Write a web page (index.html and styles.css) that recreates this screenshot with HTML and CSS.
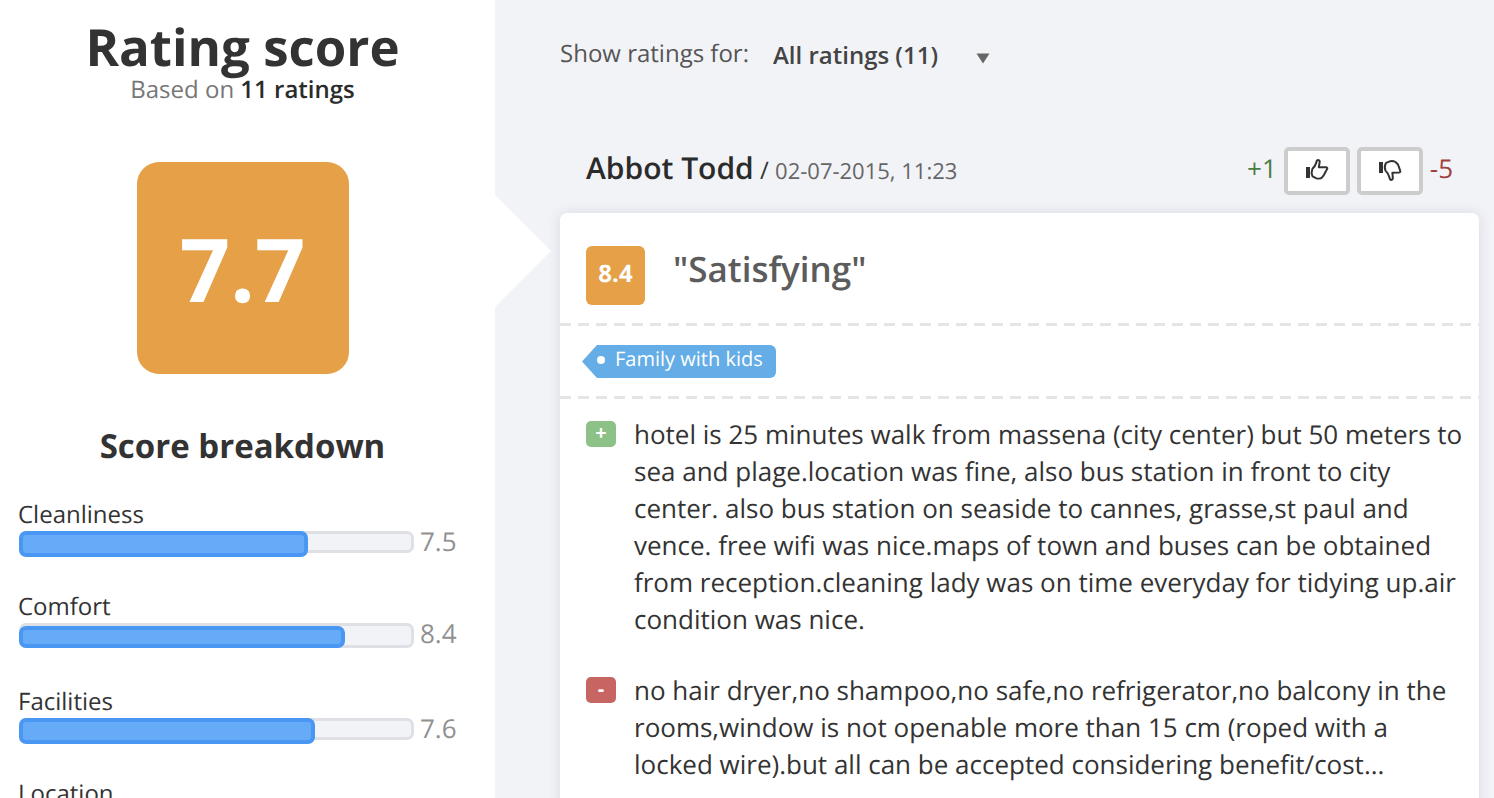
FILE: index.html
```html
<!DOCTYPE html>
<html lang="en">
<head>
<meta charset="utf-8">
<meta name="viewport" content="width=device-width, initial-scale=1">
<title>Rating score</title>
<link rel="stylesheet" href="styles.css">
</head>
<body>
<div class="page">
  <aside class="sidebar">
    <h1 class="title">Rating score</h1>
    <p class="based">Based on <strong>11 ratings</strong></p>
    <div class="total">7.7</div>
    <h2 class="subtitle">Score breakdown</h2>
    <ul class="scores">
      <li class="score">
        <span class="score-name">Cleanliness</span>
        <div class="score-row"><div class="track"><div class="fill" style="width:74.3%"></div></div><span class="score-value">7.5</span></div>
      </li>
      <li class="score">
        <span class="score-name">Comfort</span>
        <div class="score-row"><div class="track track-tall"><div class="fill" style="width:83.8%"></div></div><span class="score-value">8.4</span></div>
      </li>
      <li class="score">
        <span class="score-name">Facilities</span>
        <div class="score-row"><div class="track"><div class="fill" style="width:76.1%"></div></div><span class="score-value">7.6</span></div>
      </li>
      <li class="score">
        <span class="score-name">Location</span>
      </li>
    </ul>
  </aside>
  <main class="reviews">
    <div class="filter">
      <label class="filter-label" for="filter">Show ratings for:</label>
      <div class="select-wrap">
        <select class="filter-select" id="filter"><option>All ratings (11)</option></select>
        <svg class="caret" viewBox="0 0 14 11" aria-hidden="true"><path d="M0.5 0.5h13L7 10.5z" fill="#666"/></svg>
      </div>
    </div>
    <article class="review">
      <header class="review-head">
        <div class="author"><span class="author-name">Abbot Todd</span> / <time class="date">02-07-2015, 11:23</time></div>
        <div class="votes">
          <span class="up">+1</span>
          <button class="vote" type="button" aria-label="Helpful">
            <svg class="thumb" viewBox="0 0 24 24" fill="none" stroke="#333" stroke-width="2" stroke-linejoin="round"><path d="M1 9h4v11H1z" fill="#333" stroke="none"/><path d="M7.400 10.800C9.500 9 10.600 7 11.300 4.600C11.500 3 12.100 2 13.200 2C14.600 2.100 14.900 3.200 14.600 4.600L13.800 9.200L21 9.200C22.400 9.400 22.600 10.200 22 11.100L19 16.800L17 19.500C15.500 20.900 12.500 20.800 11 20.100L7.500 18.300C6.700 16.500 6.700 12.500 7.400 10.800Z"/></svg>
          </button>
          <button class="vote" type="button" aria-label="Not helpful">
            <svg class="thumb" viewBox="0 0 24 24" fill="none" stroke="#333" stroke-width="2" stroke-linejoin="round"><path d="M1 4h4v11H1z" fill="#333" stroke="none"/><path d="M7.500 12.600C9.500 14.500 10.700 16.500 11.400 19.200C11.600 20.900 12.100 22 13.200 22C14.600 21.900 14.900 20.800 14.800 19.400L14.400 14.800L21 14.600C22.400 14.300 22.600 13.500 22.200 12.600L20 6.500L17.500 4C15.500 2.800 12.500 2.900 11 3.700L7.800 5.200C6.700 7.500 6.700 10.800 7.500 12.600Z"/></svg>
          </button>
          <span class="down">-5</span>
        </div>
      </header>
      <div class="card">
        <div class="verdict">
          <span class="badge">8.4</span>
          <h3 class="quote">"Satisfying"</h3>
        </div>
        <div class="tags"><span class="tag">Family with kids</span></div>
        <div class="comments">
          <div class="comment"><span class="mark plus">+</span><p class="text">hotel is 25 minutes walk from massena (city center) but 50 meters to sea and plage.location was fine, also bus station in front to city center. also bus station on seaside to cannes, grasse,st paul and vence. free wifi was nice.maps of town and buses can be obtained from reception.cleaning lady was on time everyday for tidying up.air condition was nice.</p></div>
          <div class="comment"><span class="mark minus">-</span><p class="text">no hair dryer,no shampoo,no safe,no refrigerator,no balcony in the rooms,window is not openable more than 15 cm (roped with a locked wire).but all can be accepted considering benefit/cost...</p></div>
        </div>
      </div>
    </article>
  </main>
</div>
</body>
</html>
```
FILE: styles.css
```css
* { box-sizing: border-box; }
body { margin: 0; font-family: "Open Sans", "Noto Sans", sans-serif; color: #333; background: #f2f3f7; text-rendering: geometricPrecision; }
h1, h2, h3, p, ul { margin: 0; padding: 0; }
.page { display: grid; grid-template-columns: 495fr 999fr; height: 100vh; overflow: hidden; }

.sidebar { position: relative; background: #fff; padding: 17px 28px 0 18px; text-align: center; }
.sidebar::after { content: ""; position: absolute; left: 100%; top: 195px; border: 56px solid transparent; border-left-color: #fff; border-right: 0; }
.title { font-size: 51px; line-height: 59px; font-weight: 700; }
.based { font-size: 24px; line-height: 28px; color: #777; }
.based strong { font-weight: 600; color: #2b2b2b; }
.total { width: 212px; height: 212px; margin: 58px auto 0; border-radius: 22px; background: #e5a048; color: #fff; font-size: 88px; line-height: 212px; font-weight: 700; }
.subtitle { margin-top: 48px; font-size: 33px; line-height: 48px; font-weight: 700; }
.scores { margin-top: 29px; list-style: none; text-align: left; }
.score { margin-bottom: 38px; }
.score-name { display: block; font-size: 24px; line-height: 32px; }
.score-row { display: flex; align-items: flex-start; gap: 6px; padding-left: 1px; }
.track { width: 395px; height: 22px; border: 3px solid #dfe0e5; border-radius: 7px; background: #f2f3f7; }
.track-tall { height: 25px; }
.fill { height: 26px; margin: -3px; border: 4px solid #4a97f3; border-radius: 7px; background: #66abf8; }
.track-tall .fill { height: 22px; margin-top: 0; }
.score-value { font-size: 26px; line-height: 20px; color: #909090; }

.reviews { min-width: 0; padding: 30px 15px 0 65px; }
.filter { display: flex; align-items: center; gap: 24px; font-size: 24px; line-height: 42px; color: #555; }
.select-wrap { position: relative; padding-top: 5px; }
.filter-select { appearance: none; width: 220px; height: 36px; padding: 0; border: 0; background: transparent; color: #444; font: 600 24px "Open Sans", sans-serif; }
.caret { position: absolute; right: 3px; top: 23px; width: 14px; height: 11px; pointer-events: none; }
.review { margin-top: 70px; }
.review-head { display: flex; align-items: flex-start; justify-content: space-between; padding: 0 26px; height: 48px; line-height: 42px; }
.author { font-size: 24px; color: #333; }
.author-name { font-size: 30px; font-weight: 600; color: #2b2b2b; }
.date { font-size: 22px; color: #666; }
.votes { display: flex; align-items: flex-start; gap: 7px; font-size: 26px; }
.vote { width: 66px; height: 48px; padding: 0 0 3px; border: 4px solid #ccc; border-radius: 5px; background: #fff; }
.thumb { display: block; width: 24px; height: 24px; margin: 0 auto; }
.up { color: #4a7d42; }
.down { color: #a0403e; }
.card { margin-top: 18px; min-height: 700px; border-radius: 7px; background: #fff; box-shadow: 0 0 14px rgba(60, 60, 90, .13); }
.verdict { display: flex; gap: 28px; height: 110px; padding: 33px 26px 0; }
.badge { width: 59px; height: 59px; border-radius: 6px; background: #e5a048; color: #fff; font-size: 24px; line-height: 55px; font-weight: 700; text-align: center; }
.quote { font-size: 35px; line-height: 48px; font-weight: 600; color: #5c5c5c; }
.tags, .comments { background: repeating-linear-gradient(90deg, #e5e5e5 0 11px, transparent 11px 18px) top / 100% 3px no-repeat; }
.tags { height: 73px; padding: 22px 26px 0 37px; }
.tag { position: relative; display: inline-block; height: 33px; padding: 0 13px 0 18px; border-radius: 0 6px 6px 0; background: #64ade6; color: #fff; font-size: 20px; line-height: 28px; }
.tag::before { content: ""; position: absolute; right: 100%; top: 0; width: 15px; height: 33px; background: #64ade6; clip-path: polygon(100% 0, 100% 100%, 0 50%); }
.tag::after { content: ""; position: absolute; left: 0; top: 11px; width: 8px; height: 8px; border-radius: 50%; background: #fff; }
.comments { padding: 20px 14px 0 26px; }
.comment { display: flex; gap: 18px; margin-bottom: 34px; }
.mark { flex: none; width: 30px; height: 26px; margin-top: 5px; border-radius: 5px; color: #fff; font-size: 20px; line-height: 24px; font-weight: 700; text-align: center; }
.plus { background: #8cc187; }
.minus { background: #c66561; }
.text { font-size: 26px; line-height: 37px; }
```
